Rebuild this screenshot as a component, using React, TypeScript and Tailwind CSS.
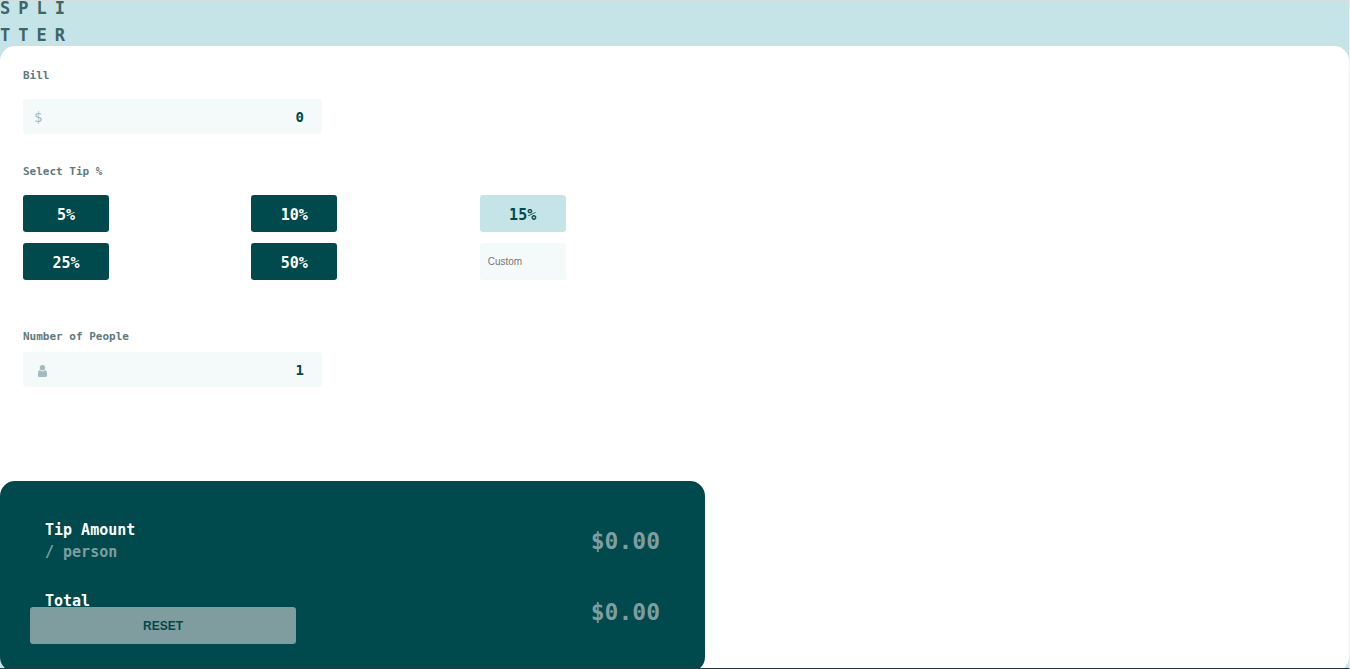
import { useState } from "react";

const TIPS = [5, 10, 15, 25, 50];

const money = (value: number) => `$${value.toFixed(2)}`;

function PersonIcon() {
  return (
    <svg viewBox="0 0 10 12" className="mt-[2px] h-3 w-[10px] fill-[#9fbdc0]" aria-hidden="true">
      <ellipse cx="4.500" cy="2.700" rx="2.700" ry="2.700" />
      <path d="M1.700 5C2.400 5.900 3.400 6.300 4.500 6.300s2.100-.4 2.800-1.300C8.500 5.600 9 7 9 8.600v1.900c0 .9-.6 1.500-1.500 1.500h-6C.6 12 0 11.400 0 10.500V8.600C0 7 .5 5.600 1.700 5Z" />
    </svg>
  );
}

type FieldProps = {
  id: string;
  value: string;
  onChange: (value: string) => void;
  icon: React.ReactNode;
  iconClass: string;
};

function NumberField({ id, value, onChange, icon, iconClass }: FieldProps) {
  return (
    <div className={`flex h-[35px] w-[299px] max-w-full items-center rounded-[3px] bg-[#f4fafa] pt-px pr-[18px] ${iconClass}`}>
      {icon}
      <input
        id={id}
        inputMode="decimal"
        value={value}
        onChange={(e) => onChange(e.target.value)}
        className="min-w-0 flex-1 bg-transparent text-right text-[14px] font-bold text-[#00494d] outline-none"
      />
    </div>
  );
}

function ResultRow({ title, amount }: { title: string; amount: number }) {
  return (
    <div className="flex items-center justify-between">
      <p className="text-[15px] leading-[22px] font-bold text-white">
        {title}
        <span className="block text-[#7f9d9f]">/ person</span>
      </p>
      <output className="text-[23px] leading-[28px] font-bold text-[#7f9d9f]">{money(amount)}</output>
    </div>
  );
}

export default function App() {
  const [bill, setBill] = useState("0");
  const [people, setPeople] = useState("1");
  const [tip, setTip] = useState(15);
  const [custom, setCustom] = useState("");

  const rate = custom ? Number(custom) || 0 : tip;
  const total = Number(bill) || 0;
  const heads = Math.max(1, Number(people) || 1);
  const tipEach = (total * rate) / 100 / heads;

  const reset = () => {
    setBill("0");
    setPeople("1");
    setTip(15);
    setCustom("");
  };

  const labelClass = "block text-[11px] leading-4 font-bold text-[#5e7a7d]";

  return (
    <div className="h-screen overflow-x-hidden overflow-y-clip border-t border-r border-b border-t-[#d9dcdc] border-r-[#eef1f1] border-b-[#26384a] bg-[#c5e4e7] font-['DejaVu_Sans_Mono',monospace]">
      <header className="h-[45px]">
        <h1 className="flex flex-col gap-[13px] text-[17px] leading-[14px] font-bold tracking-[8px] text-[#3d6666]">
          <span>SPLI</span>
          <span>TTER</span>
        </h1>
      </header>

      <main className="rounded-[15px] bg-white">
        <div className="px-[23px] pt-[22px] pb-[94px]">
          <label htmlFor="bill" className={labelClass}>Bill</label>
          <div className="mt-[15px]">
            <NumberField
              id="bill"
              value={bill}
              onChange={setBill}
              iconClass="pl-[11px]"
              icon={<span className="text-[14px] text-[#9fbdc0]">$</span>}
            />
          </div>

          <fieldset className="mt-[30px]">
            <legend className={labelClass}>Select Tip %</legend>
            <div className="mt-[15px] grid w-[685px] max-w-full grid-cols-3 gap-y-[11px]">
              {TIPS.map((t) => (
                <button
                  key={t}
                  type="button"
                  aria-pressed={t === tip}
                  onClick={() => {
                    setTip(t);
                    setCustom("");
                  }}
                  className={`h-[37px] w-[86px] rounded-[3px] pt-[3px] text-[15px] font-bold ${
                    t === tip ? "bg-[#c5e4e7] text-[#00494d]" : "bg-[#00494d] text-white"
                  }`}
                >
                  {t}%
                </button>
              ))}
              <input
                aria-label="Custom tip"
                placeholder="Custom"
                inputMode="decimal"
                value={custom}
                onChange={(e) => setCustom(e.target.value)}
                className="h-[37px] w-[86px] rounded-[3px] bg-[#f4fafa] px-2 font-['Liberation_Sans',sans-serif] text-[10px] text-[#00494d] outline-none placeholder:text-[#757575]"
              />
            </div>
          </fieldset>

          <label htmlFor="people" className={`${labelClass} mt-[49px]`}>Number of People</label>
          <div className="mt-[7px]">
            <NumberField id="people" value={people} onChange={setPeople} iconClass="pl-[15px]" icon={<PersonIcon />} />
          </div>
        </div>

        <section className="relative flex w-[705px] max-w-full flex-col gap-[27px] rounded-[15px] bg-[#00494d] px-[45px] py-[38px]">
          <ResultRow title="Tip Amount" amount={tipEach} />
          <ResultRow title="Total" amount={total / heads + tipEach} />
          <button
            type="button"
            onClick={reset}
            className="absolute bottom-7 left-[30px] h-[37px] w-[266px] rounded-[3px] bg-[#7f9c9e] font-['Liberation_Sans',sans-serif] text-[12px] font-bold text-[#00494d]"
          >
            RESET
          </button>
        </section>
      </main>
    </div>
  );
}
